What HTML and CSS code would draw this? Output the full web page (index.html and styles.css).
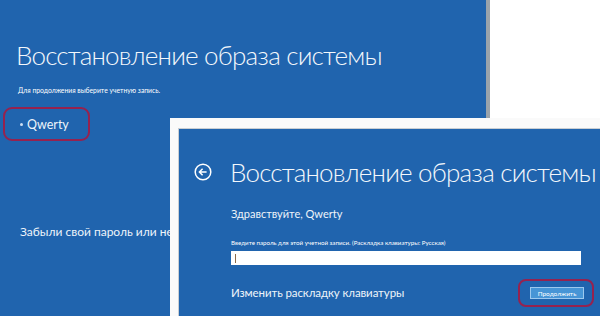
FILE: index.html
```html
<!DOCTYPE html>
<html lang="ru">
<head>
    <meta charset="UTF-8">
    <meta name="viewport" content="width=device-width, initial-scale=1.0">
    <title>Восстановление образа системы</title>
    <link rel="stylesheet" href="styles.css">
</head>
<body>
    <div class="desk">
        <!-- first screen: account choice -->
        <section class="screen first">
            <h1 class="title">Восстановление образа системы</h1>
            <p class="hint">Для продолжения выберите учетную запись.</p>
            <div class="account">
                <span class="dot"></span>
                <span>Qwerty</span>
            </div>
            <p class="forgot">Забыли свой пароль или не</p>
        </section>

        <!-- second screen: password, laid over the first -->
        <section class="screen second">
            <div class="head">
                <svg class="back" width="18" height="18" viewBox="0 0 18 18">
                    <circle cx="9" cy="9" r="7.8" fill="none" stroke="#fff" stroke-width="1.5"/>
                    <path d="M12.6 9H5.6M8.6 5.8L5.4 9l3.2 3.2" fill="none" stroke="#fff" stroke-width="1.5"/>
                </svg>
                <h1 class="title">Восстановление образа системы</h1>
            </div>
            <div class="body">
                <p class="hello">Здравствуйте, Qwerty</p>
                <label class="pw-label" for="pw">Введите пароль для этой учетной записи. (Раскладка клавиатуры: Русская)</label>
                <div class="pw-box"><span class="caret"></span></div>
                <div class="actions">
                    <span class="layout">Изменить раскладку клавиатуры</span>
                    <div class="ring">
                        <button type="button" class="go">Продолжить</button>
                    </div>
                </div>
            </div>
        </section>
    </div>
</body>
</html>
```

FILE: styles.css
```css
body {
    margin: 0;
    background: #fff;
    font-family: Lato, 'Open Sans', sans-serif;
    color: #fff;
}
.desk {
    position: relative;
    width: 600px;
    height: 316px;
    overflow: hidden;
    background: #fff;
}
.screen {
    background: #2064ae;
    box-sizing: border-box;
}
.title {
    margin: 0;
    font-weight: 300;
    font-size: 26px;
    line-height: 34px;
    letter-spacing: -0.8px;
    white-space: nowrap;
    color: #f4f8fc;
}
.first {
    width: 490px;
    height: 316px;
    padding: 38px 0 0 16px;
    border-right: 4px solid #9aa3ab;
}
.hint {
    margin: 13px 0 0 2px;
    font-size: 6.8px;
    line-height: 10px;
}
.account {
    display: flex;
    align-items: center;
    gap: 4px;
    width: 68px;
    height: 30px;
    margin: 12px 0 0 -13px;
    padding-left: 15px;
    border: 2px solid #96224f;
    border-radius: 9px;
    font-size: 12.5px;
    color: #eef4fa;
}
.dot {
    width: 3px;
    height: 3px;
    border-radius: 50%;
    background: #cfe0f2;
}
.forgot {
    margin: 83px 0 0 4px;
    font-size: 12px;
    line-height: 16px;
    color: #eef4fa;
}
.second {
    position: absolute;
    left: 170px;
    top: 118px;
    right: 0;
    bottom: 0;
    border-top: 10px solid #fafafa;
    border-left: 8px solid #fafafa;
    padding: 27px 0 0 16px;
    box-shadow: inset 1px 1px 0 #c9ced3;
}
.head {
    display: flex;
    align-items: center;
    gap: 18px;
}
.back {
    flex-shrink: 0;
}
.body {
    padding-left: 37px;
}
.hello {
    margin: 17px 0 0;
    font-size: 11px;
    line-height: 16px;
    color: #eef4fa;
}
.pw-label {
    display: block;
    margin-top: 16px;
    font-size: 6.2px;
    line-height: 9px;
}
.pw-box {
    width: 350px;
    height: 14px;
    margin-top: 4px;
    background: #fff;
    display: flex;
    align-items: center;
    padding-left: 4px;
    box-sizing: border-box;
}
.caret {
    width: 1px;
    height: 9px;
    background: #8a6a4a;
}
.actions {
    display: flex;
    align-items: center;
    justify-content: space-between;
    width: 363px;
    margin-top: 14px;
}
.layout {
    font-size: 11.5px;
    line-height: 18px;
    letter-spacing: -0.1px;
    color: #eef4fa;
}
.ring {
    border: 2px solid #96224f;
    border-radius: 8px;
    padding: 6px 8px 6px 10px;
}
.go {
    display: block;
    width: 54px;
    height: 12px;
    padding: 0;
    border: 1px solid #9cc8ee;
    background: #4795d6;
    color: #fff;
    font-family: Lato, sans-serif;
    font-size: 6.5px;
    cursor: pointer;
}
```
